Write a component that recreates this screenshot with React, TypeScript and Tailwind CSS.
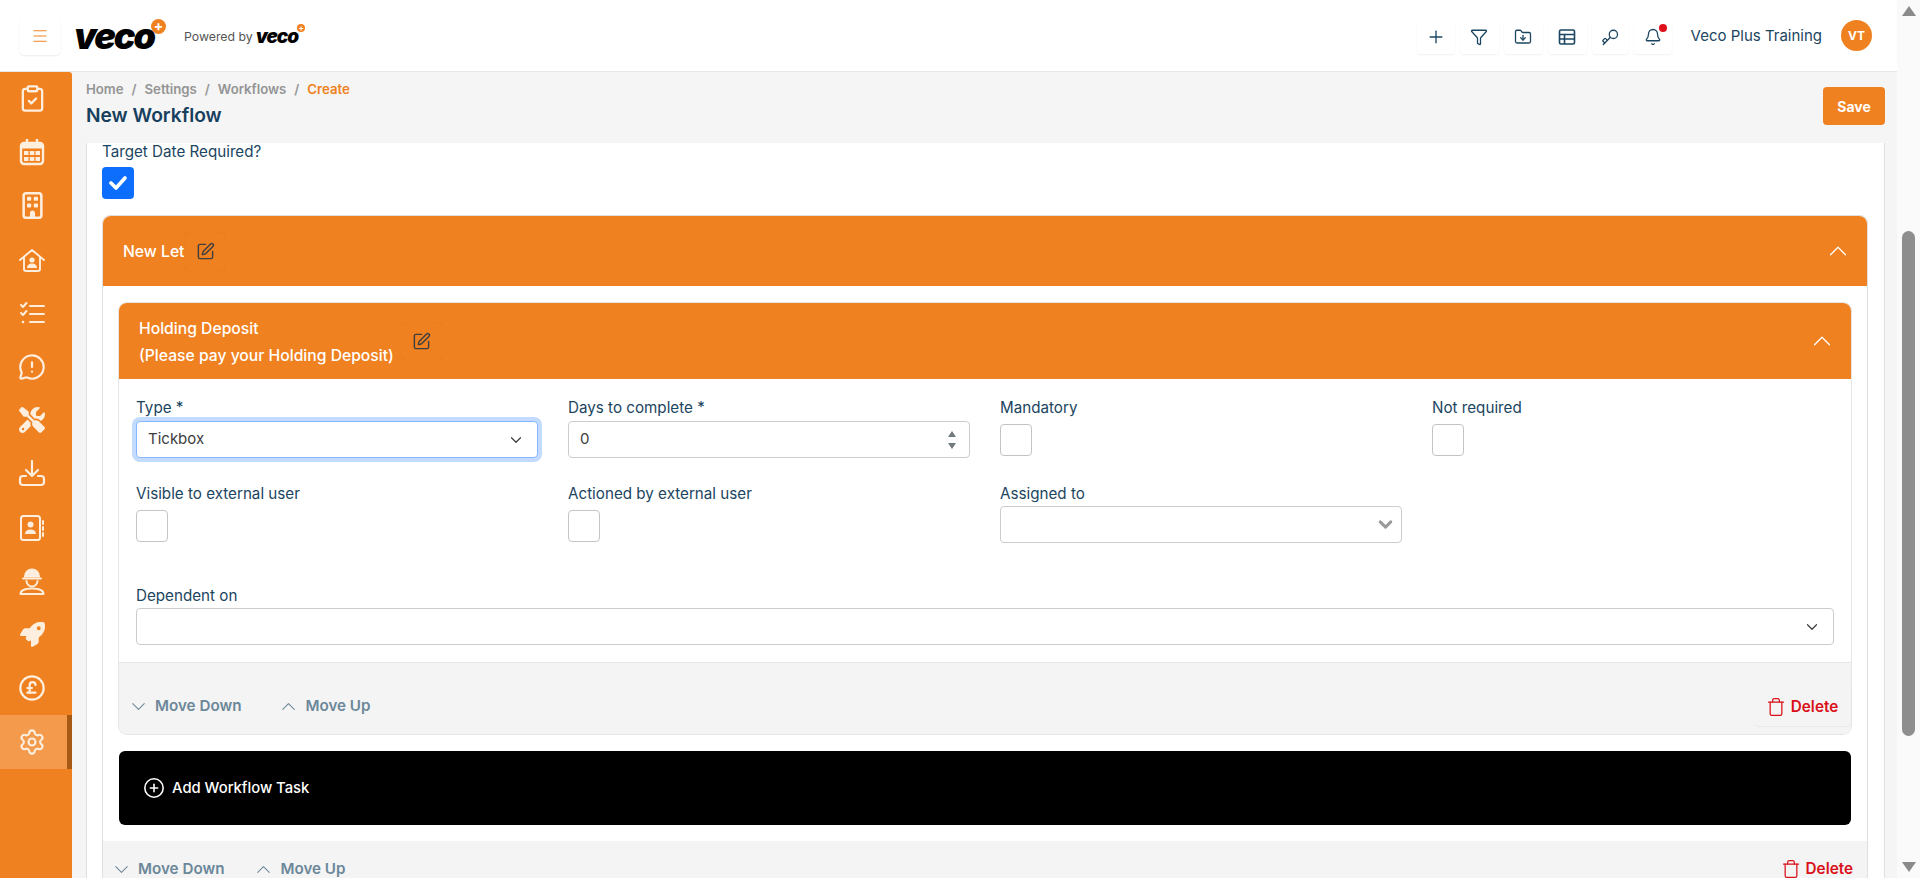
import React from "react";
import { Plus, Filter, FolderDown, Key, Bell, Menu, SquarePen, ChevronUp, ChevronDown, Trash, CirclePlus, Settings, CirclePoundSterling, ClipboardCheck, MessageCircleWarning } from "lucide-react";
import { FaRegBuilding, FaRocket, FaScrewdriverWrench } from "react-icons/fa6";

const Cal = () => (
  <svg width="28" height="30" viewBox="0 0 28 30" fill="none" stroke="currentColor" strokeWidth="2.400">
    <rect x="3" y="6" width="22" height="21" rx="3" />
    <path d="M3 9h22" strokeWidth="5" />
    <path d="M9 2v5M19 2v5" />
    <path d="M6 14h4.500v4H6zM11.800 14h4.500v4h-4.500zM17.500 14h4.500v4h-4.500zM6 20h4.500v4H6zM11.800 20h4.500v4h-4.500zM17.500 20h4.500v4h-4.500z" fill="currentColor" stroke="none" />
  </svg>
);
const HouseUser = () => (
  <svg width="28" height="28" viewBox="0 0 28 28" fill="none" stroke="currentColor" strokeWidth="1.900">
    <path d="M2 14 14 4l12 10M6 11v12a2 2 0 0 0 2 2h12a2 2 0 0 0 2-2V11" strokeLinecap="round" strokeLinejoin="round" />
    <circle cx="14" cy="14" r="2.600" fill="currentColor" stroke="none" />
    <path d="M9 22c0-3 2-4.500 5-4.500s5 1.500 5 4.500z" fill="currentColor" stroke="none" />
  </svg>
);
const Checks = () => (
  <svg width="28" height="28" viewBox="0 0 28 28" fill="none" stroke="currentColor" strokeWidth="2" strokeLinecap="round" strokeLinejoin="round">
    <path d="M3 6l2 2 3.500-4M3 14l2 2 3.500-4M12 7h14M12 15h14M12 23h14" />
    <circle cx="5" cy="23" r="1.300" fill="currentColor" stroke="none" />
  </svg>
);
const Tray = () => (
  <svg width="28" height="28" viewBox="0 0 28 28" fill="none" stroke="currentColor" strokeWidth="2.200" strokeLinecap="round" strokeLinejoin="round">
    <path d="M14 1v15M8 10l6 6 6-6" />
    <path d="M8 16H5a3 3 0 0 0-3 3v3a3 3 0 0 0 3 3h18a3 3 0 0 0 3-3v-3a3 3 0 0 0-3-3h-3" />
  </svg>
);
const AddressBook = () => (
  <svg width="28" height="28" viewBox="0 0 28 28" fill="none" stroke="currentColor" strokeWidth="2" strokeLinecap="round">
    <rect x="3" y="2" width="19" height="24" rx="2.500" />
    <path d="M25 7v3M25 13v3M25 19v3" />
    <circle cx="12.500" cy="10.500" r="3" fill="currentColor" stroke="none" />
    <path d="M7 20c0-3 2-4.500 5.500-4.500S18 17 18 20z" fill="currentColor" stroke="none" />
  </svg>
);
const Worker = () => (
  <svg width="30" height="30" viewBox="0 0 30 30" fill="none" stroke="currentColor" strokeWidth="2">
    <path d="M7 10.500a8 8 0 0 1 16 0v1H7z" fill="currentColor" stroke="none" />
    <path d="M6 12.500h18" strokeLinecap="round" />
    <path d="M9.500 15a5.500 5.500 0 0 0 11 0" strokeLinecap="round" />
    <path d="M3.500 28c0-3.500 4-5.500 11.500-5.500s11.500 2 11.500 5.500z" strokeLinejoin="round" />
  </svg>
);
const TableIcon = () => (
  <svg width="18" height="18" viewBox="0 0 18 18" fill="none" stroke="currentColor" strokeWidth="1.600">
    <rect x="1.500" y="2" width="15" height="14" rx="1.500" />
    <path d="M1.500 6.500h15M1.500 11h15M6.500 6.500V16" />
  </svg>
);
const sideIcons = [
  <ClipboardCheck size={29} strokeWidth={1.9} />,
  <Cal />,
  <FaRegBuilding size={27} />,
  <HouseUser />,
  <Checks />,
  <MessageCircleWarning size={28} strokeWidth={1.9} />,
  <FaScrewdriverWrench size={26} />,
  <Tray />,
  <AddressBook />,
  <Worker />,
  <FaRocket size={25} />,
  <CirclePoundSterling size={28} strokeWidth={1.9} />,
];

const Logo = ({ small }: { small?: boolean }) =>
  small ? (
    <span className="flex items-start">
      <span className="font-black italic text-[19px] leading-[22px] tracking-[-1px] text-black">veco</span>
      <span className="-ml-[1px] -mt-[2px] flex h-[8px] w-[8px] items-center justify-center rounded-full bg-[#f08120] text-[8px] font-bold leading-none text-white">+</span>
    </span>
  ) : (
    <span className="flex items-start">
      <span className="font-black italic text-[36px] leading-[40px] tracking-[-2px] text-black">veco</span>
      <span className="-ml-[3px] mt-[3px] flex h-[15px] w-[15px] items-center justify-center rounded-full bg-[#f08120] text-[14px] font-bold leading-none text-white">+</span>
    </span>
  );

const TopBtn = ({ w, children }: { w: string; children: React.ReactNode }) => (
  <div className={`flex h-[34px] items-center justify-center rounded-[4px] text-[#1b4560] shadow-[0_1px_2px_rgba(0,0,0,0.06)] ${w}`}>{children}</div>
);

const Label = ({ children }: { children: React.ReactNode }) => (
  <div className="h-[24px] text-[15.200px] leading-[24px] text-[#1b4560]">{children}</div>
);
const Box = () => <div className="mt-[4px] h-[32px] w-[32px] rounded-[4px] border border-[#c4c4c4] bg-white" />;
const Edit = () => (
  <div className="flex h-[37px] w-[40px] items-center justify-center rounded-[4px] text-[#3f3f3f] shadow-[0_0_1px_rgba(0,0,0,0.15)]">
    <SquarePen size={19} strokeWidth={1.8} />
  </div>
);
const Moves = ({ gap }: { gap: string }) => (
  <div className={`flex items-center text-[15.200px] font-semibold text-[#6b8799] ${gap}`}>
    <span className="flex items-center gap-[5px]"><ChevronDown size={23} strokeWidth={1.100} />Move Down</span>
    <span className="flex items-center gap-[5px]"><ChevronUp size={23} strokeWidth={1.100} />Move Up</span>
  </div>
);
const Del = () => (
  <span className="flex items-center gap-[5px] text-[15.300px] font-semibold text-[#d9101a]"><Trash size={20} strokeWidth={1.500} />Delete</span>
);

export default function App() {
  return (
    <div className="flex h-screen w-full overflow-hidden bg-[#f5f5f5] font-[Inter,sans-serif]">
      <div className="flex min-w-0 flex-1 flex-col">
        <header className="flex h-[72px] shrink-0 items-center border-b border-[#e8e8e8] bg-white pl-[20px] pr-[25px]">
          <div className="flex h-[38px] w-[40px] items-center justify-center rounded-[4px] text-[#f08120] shadow-[0_1px_2px_rgba(0,0,0,0.08)]">
            <Menu size={18} strokeWidth={1.500} />
          </div>
          <div className="ml-[14px]"><Logo /></div>
          <div className="ml-[18px] mt-[3px] flex items-center gap-[3px] text-[12.300px] text-[#555]">Powered by <Logo small /></div>
          <div className="ml-auto mt-[2px] flex items-center gap-[5px]">
            <TopBtn w="w-[38px]"><Plus size={20} strokeWidth={1.600} /></TopBtn>
            <TopBtn w="w-[39px]"><Filter size={18} strokeWidth={1.700} /></TopBtn>
            <TopBtn w="w-[39px]"><FolderDown size={18} strokeWidth={1.700} /></TopBtn>
            <TopBtn w="w-[39px]"><TableIcon /></TopBtn>
            <TopBtn w="w-[37px]"><Key size={18} strokeWidth={1.700} className="rotate-180" /></TopBtn>
            <TopBtn w="w-[38px]">
              <span className="relative">
                <Bell size={18} strokeWidth={1.700} />
                <span className="absolute -right-[5px] -top-[4px] h-[8px] w-[8px] rounded-full bg-[#e0101a]" />
              </span>
            </TopBtn>
            <span className="ml-[14px] text-[15px] text-[#1b4560]">Veco Plus Training</span>
            <span className="ml-[14px] -mt-[2px] flex h-[31px] w-[31px] items-center justify-center rounded-full bg-[#f08120] text-[12px] font-bold text-white">VT</span>
          </div>
        </header>
        <div className="flex min-h-0 flex-1">
          <nav className="w-[72px] shrink-0 rounded-tr-[3px] bg-[#f08120] text-[#fdeedd]">
            {sideIcons.map((ic, i) => (
              <div key={i} className="flex h-[53.600px] items-center justify-center pr-[8px]">{ic}</div>
            ))}
            <div className="flex h-[53.600px] items-center border-r-[5px] border-[#a85a14] bg-[#f39a4c]">
              <div className="flex w-full items-center justify-center pr-[3px]"><Settings size={28} strokeWidth={1.800} /></div>
            </div>
          </nav>
          <main className="flex min-w-0 flex-1 flex-col pl-[14px] pr-[12px]">
            <div className="flex h-[71px] shrink-0 items-start justify-between">
              <div>
                <div className="mt-[7px] flex gap-[8px] text-[13.200px] font-semibold leading-[20px] text-[#949494]">
                  <span>Home</span><span>/</span><span>Settings</span><span>/</span><span>Workflows</span><span>/</span><span className="text-[#f08120]">Create</span>
                </div>
                <div className="mt-[3px] text-[19.200px] font-semibold leading-[26px] text-[#17405e]">New Workflow</div>
              </div>
              <div className="mt-[15px] flex h-[38px] w-[62px] items-center justify-center rounded-[4px] bg-[#f08120] text-[14px] font-bold text-white">Save</div>
            </div>
            <div className="min-h-0 flex-1 overflow-hidden border-x border-[#dfdfdf] bg-white pl-[15px] pr-[16px]">
              <div className="h-[24px] text-[15.200px] leading-[18px] text-[#1b4560]">Target Date Required?</div>
              <div className="flex h-[32px] w-[32px] items-center justify-center rounded-[4px] bg-[#0d6efd] text-white">
                <svg width="18" height="14" viewBox="0 0 18 14" fill="none" stroke="currentColor" strokeWidth="3.600" strokeLinecap="round" strokeLinejoin="round"><path d="M2 7l5 5 9-10" /></svg>
              </div>
              <section className="mt-[16px] rounded-lg border border-[#dfdfdf]">
                <div className="flex h-[70px] items-center justify-between rounded-t-lg bg-[#f08120] pl-[20px] pr-[14px] text-white">
                  <div className="flex items-center gap-[1px] text-[15.700px] font-medium"><span className="pt-[2px]">New Let</span><Edit /></div>
                  <ChevronUp size={30} strokeWidth={1} />
                </div>
                <div className="px-[16px] pb-[16px] pt-[17px]">
                  <div className="rounded-lg shadow-[0_0_0_1px_#e6e6e6]">
                    <div className="flex h-[76px] items-center justify-between rounded-t-lg bg-[#f08120] pl-[20px] pr-[14px] text-white">
                      <div className="flex items-center gap-[8px] text-[15.700px] font-medium leading-[27px]">
                        <div className="pt-[2px]"><div>Holding Deposit</div><div>(Please pay your Holding Deposit)</div></div>
                        <Edit />
                      </div>
                      <ChevronUp size={30} strokeWidth={1} />
                    </div>
                    <div className="border-b border-[#e6e6e6] px-[17px] pb-[17px] pt-[17px]">
                      <div className="grid grid-cols-4 gap-x-[30px]">
                        <div className="h-[86px]">
                          <Label>Type *</Label>
                          <div className="mt-[1px] flex h-[37px] items-center justify-between rounded-[4px] border border-[#86b7fe] bg-white pl-[11px] pr-[12px] text-[15px] text-[#3c3c3c] shadow-[0_0_0_4px_#c2dbfe]">
                            Tickbox<ChevronDown size={18} strokeWidth={1.600} />
                          </div>
                        </div>
                        <div className="h-[86px]">
                          <Label>Days to complete *</Label>
                          <div className="mt-[1px] flex h-[37px] items-center justify-between rounded-[4px] border border-[#cccccc] bg-white pl-[11px] pr-[12px] text-[15px] text-[#3c3c3c]">
                            0
                            <svg width="10" height="22" viewBox="0 0 10 22" fill="#6f7a80"><path d="M5 2l4 6H1zM5 20l4-6H1z" /></svg>
                          </div>
                        </div>
                        <div className="h-[86px]"><Label>Mandatory</Label><Box /></div>
                        <div className="h-[86px]"><Label>Not required</Label><Box /></div>
                        <div className="h-[102px]"><Label>Visible to external user</Label><Box /></div>
                        <div className="h-[102px]"><Label>Actioned by external user</Label><Box /></div>
                        <div className="h-[102px]">
                          <Label>Assigned to</Label>
                          <div className="flex h-[37px] items-center justify-end rounded-[4px] border border-[#cccccc] bg-white pr-[5px] text-[#9a9a9a]">
                            <ChevronDown size={21} strokeWidth={3.400} />
                          </div>
                        </div>
                        <div className="h-[102px]" />
                      </div>
                      <Label>Dependent on</Label>
                      <div className="flex h-[37px] items-center justify-end rounded-[4px] border border-[#cccccc] bg-white pr-[12px] text-[#3c3c3c]">
                        <ChevronDown size={18} strokeWidth={1.600} />
                      </div>
                    </div>
                    <div className="flex h-[71px] items-start justify-between rounded-b-lg bg-[#f4f4f4] pl-[8px] pt-[32px]">
                      <Moves gap="gap-[36px]" />
                      <div className="-mt-[13px] flex h-[44px] w-[96px] items-center justify-center rounded-[4px] pr-[2px] pt-[6px] shadow-[0_1px_1px_rgba(0,0,0,0.05)]"><Del /></div>
                    </div>
                  </div>
                  <div className="mt-[17px] flex h-[74px] items-center gap-[7px] rounded-md bg-black pl-[24px] text-[14.800px] font-medium text-white">
                    <CirclePlus size={22} strokeWidth={1.700} />Add Workflow Task
                  </div>
                </div>
                <div className="flex h-[60px] items-start justify-between bg-[#f4f4f4] pl-[7px] pr-[14px] pt-[17px]">
                  <Moves gap="gap-[28px]" />
                  <Del />
                </div>
              </section>
            </div>
          </main>
        </div>
      </div>
      <div className="flex w-[23px] shrink-0 flex-col items-center justify-between bg-[#fafafa] py-[6px]">
        <svg width="14" height="10" viewBox="0 0 14 10" fill="#8a8a8a"><path d="M7 0l7 10H0z" /></svg>
        <div className="mb-[126px] mt-[215px] w-[13px] flex-1 rounded-full bg-[#8e8e8e]" />
        <svg width="14" height="10" viewBox="0 0 14 10" fill="#8a8a8a"><path d="M7 10l7-10H0z" /></svg>
      </div>
    </div>
  );
}
